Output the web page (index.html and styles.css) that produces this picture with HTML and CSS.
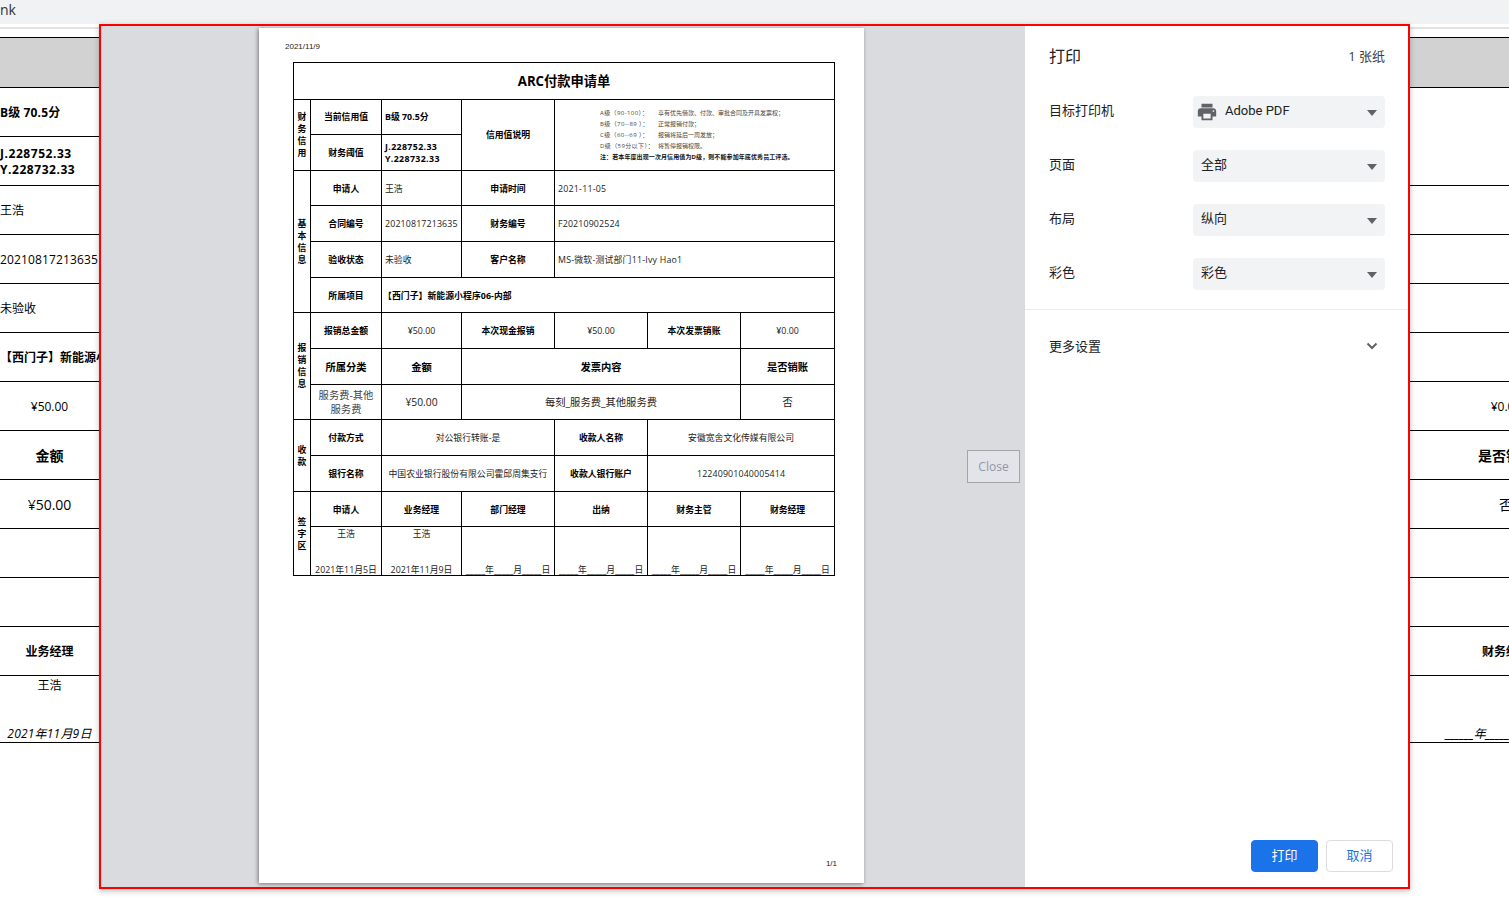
FILE: index.html
```html
<!DOCTYPE html>
<html lang="zh-CN">
<head>
<meta charset="utf-8">
<title>ARC付款申请单</title>
<link rel="stylesheet" href="styles.css">
</head>
<body>
<div class="topbar">nk</div>
<div class="rule"></div>
<div class="bg">
  <div class="bg-row head"><div class="bg-cell"></div><div class="bg-cell bg-right"></div></div>
  <div class="bg-row strong"><div class="bg-cell tl num">B级 70.5分</div><div class="bg-cell bg-right noline"></div></div>
  <div class="bg-row strong"><div class="bg-cell tl wide">J.228752.33<br>Y.228732.33</div><div class="bg-cell bg-right"></div></div>
  <div class="bg-row"><div class="bg-cell tl">王浩</div><div class="bg-cell bg-right"></div></div>
  <div class="bg-row"><div class="bg-cell tl num">20210817213635</div><div class="bg-cell bg-right"></div></div>
  <div class="bg-row"><div class="bg-cell tl">未验收</div><div class="bg-cell bg-right"></div></div>
  <div class="bg-row strong"><div class="bg-cell tl">【西门子】新能源小程序06-内部</div><div class="bg-cell bg-right"></div></div>
  <div class="bg-row"><div class="bg-cell">¥50.00</div><div class="bg-cell bg-right">¥0.00</div></div>
  <div class="bg-row strong large"><div class="bg-cell">金额</div><div class="bg-cell bg-right">是否销账</div></div>
  <div class="bg-row large"><div class="bg-cell">¥50.00</div><div class="bg-cell bg-right">否</div></div>
  <div class="bg-row"><div class="bg-cell"></div><div class="bg-cell bg-right"></div></div>
  <div class="bg-row"><div class="bg-cell"></div><div class="bg-cell bg-right"></div></div>
  <div class="bg-row strong"><div class="bg-cell">业务经理</div><div class="bg-cell bg-right">财务经理</div></div>
  <div class="bg-row last">
    <div class="bg-cell sign"><span>王浩</span><em>2021年11月9日</em></div>
    <div class="bg-cell bg-right sign"><span></span><em>______年______月______日</em></div>
  </div>
</div>

<div class="dialog">
  <div class="preview">
    <div class="paper">
      <div class="print-date">2021/11/9</div>
      <table class="form">
        <colgroup>
          <col class="c-v"><col class="c-1"><col class="c-2"><col class="c-3"><col class="c-3"><col class="c-3"><col class="c-4">
        </colgroup>
        <tr class="r37"><th colspan="7" class="title">ARC付款申请单</th></tr>
        <tr class="r35a">
          <th rowspan="2" class="vert">财务信用</th>
          <th>当前信用值</th>
          <th class="l">B级 70.5分</th>
          <th rowspan="2">信用值说明</th>
          <td rowspan="2" colspan="3" class="legend">
            <div><span class="grade">A级（90-100）：</span>享有优先借款、付款、审批合同及开具发票权；</div>
            <div><span class="grade">B级（70--89 ）：</span>正常报销付款；</div>
            <div><span class="grade">C级（60--69 ）：</span>报销将延后一周发放；</div>
            <div><span class="grade">D级（59分以下）：</span>将暂停报销权限。</div>
            <div class="note">注：若本年度出现一次月信用值为D级，则不能参加年底优秀员工评选。</div>
          </td>
        </tr>
        <tr class="r36">
          <th>财务阈值</th>
          <th class="l wide">J.228752.33<br>Y.228732.33</th>
        </tr>
        <tr class="r35">
          <th rowspan="4" class="vert">基本信息</th>
          <th>申请人</th>
          <td class="l">王浩</td>
          <th>申请时间</th>
          <td colspan="3" class="l lat">2021-11-05</td>
        </tr>
        <tr class="r36">
          <th>合同编号</th>
          <td class="l num">20210817213635</td>
          <th>财务编号</th>
          <td colspan="3" class="l num">F20210902524</td>
        </tr>
        <tr class="r36">
          <th>验收状态</th>
          <td class="l">未验收</td>
          <th>客户名称</th>
          <td colspan="3" class="l lat">MS-微软-测试部门11-Ivy Hao1</td>
        </tr>
        <tr class="r35">
          <th>所属项目</th>
          <th colspan="5" class="l bracket">【西门子】新能源小程序06-内部</th>
        </tr>
        <tr class="r36">
          <th rowspan="3" class="vert">报销信息</th>
          <th>报销总金额</th>
          <td>¥50.00</td>
          <th>本次现金报销</th>
          <td>¥50.00</td>
          <th>本次发票销账</th>
          <td>¥0.00</td>
        </tr>
        <tr class="r36 big">
          <th>所属分类</th>
          <th>金额</th>
          <th colspan="3">发票内容</th>
          <th>是否销账</th>
        </tr>
        <tr class="r35a big">
          <td class="tight">服务费-其他服务费</td>
          <td>¥50.00</td>
          <td colspan="3">每刻_服务费_其他服务费</td>
          <td>否</td>
        </tr>
        <tr class="r36">
          <th rowspan="2" class="vert">收款</th>
          <th>付款方式</th>
          <td colspan="2">对公银行转账-是</td>
          <th>收款人名称</th>
          <td colspan="2">安徽宽舍文化传媒有限公司</td>
        </tr>
        <tr class="r36">
          <th>银行名称</th>
          <td colspan="2">中国农业银行股份有限公司霍邱周集支行</td>
          <th>收款人银行账户</th>
          <td colspan="2" class="num">12240901040005414</td>
        </tr>
        <tr class="r35">
          <th rowspan="2" class="vert">签字区</th>
          <th>申请人</th>
          <th>业务经理</th>
          <th>部门经理</th>
          <th>出纳</th>
          <th>财务主管</th>
          <th>财务经理</th>
        </tr>
        <tr class="r49">
          <td><div class="sig"><span>王浩</span><span>2021年11月5日</span></div></td>
          <td><div class="sig"><span>王浩</span><span>2021年11月9日</span></div></td>
          <td><div class="sig"><span></span><span>_____年_____月_____日</span></div></td>
          <td><div class="sig"><span></span><span>_____年_____月_____日</span></div></td>
          <td><div class="sig"><span></span><span>_____年_____月_____日</span></div></td>
          <td><div class="sig"><span></span><span>_____年_____月_____日</span></div></td>
        </tr>
      </table>
      <div class="page-no">1/1</div>
    </div>
    <button class="close" type="button">Close</button>
  </div>

  <aside class="side">
    <div class="side-head"><h1>打印</h1><span>1 张纸</span></div>
    <div class="settings">
      <div class="setting">
        <label>目标打印机</label>
        <div class="select">
          <svg class="printer" viewBox="0 0 24 24" width="22" height="22"><path d="M19 8H5c-1.66 0-3 1.34-3 3v6h4v4h12v-4h4v-6c0-1.66-1.34-3-3-3zm-3 11H8v-5h8v5zm3-7c-.55 0-1-.45-1-1s.45-1 1-1 1 .45 1 1-.45 1-1 1zm-1-9H6v4h12V3z"/></svg>
          <span class="pdf">Adobe PDF</span>
          <svg class="caret" viewBox="0 0 10 6" width="10" height="6"><path d="M0 0h10L5 6z"/></svg>
        </div>
      </div>
      <div class="setting">
        <label>页面</label>
        <div class="select"><span>全部</span><svg class="caret" viewBox="0 0 10 6" width="10" height="6"><path d="M0 0h10L5 6z"/></svg></div>
      </div>
      <div class="setting">
        <label>布局</label>
        <div class="select"><span>纵向</span><svg class="caret" viewBox="0 0 10 6" width="10" height="6"><path d="M0 0h10L5 6z"/></svg></div>
      </div>
      <div class="setting">
        <label>彩色</label>
        <div class="select"><span>彩色</span><svg class="caret" viewBox="0 0 10 6" width="10" height="6"><path d="M0 0h10L5 6z"/></svg></div>
      </div>
    </div>
    <div class="more">
      <span>更多设置</span>
      <svg viewBox="0 0 12 8" width="12" height="8"><path d="M1.5 1.5 6 6l4.500-4.500"/></svg>
    </div>
    <div class="actions">
      <button class="btn primary" type="button">打印</button>
      <button class="btn" type="button">取消</button>
    </div>
  </aside>
</div>
</body>
</html>
```

FILE: styles.css
```css
* { box-sizing: border-box; }
html, body { margin: 0; height: 913px; overflow: hidden; background: #fff; }
body {
  position: relative;
  font-family: "Open Sans", "Noto Sans CJK SC", sans-serif;
  color: #000;
}

/* page behind the dialog */
.topbar {
  height: 24px;
  background: #f1f2f4;
  font-size: 14px;
  line-height: 20px;
  color: #333;
}
.rule { height: 5px; border-bottom: 2px solid #e4e4e4; }
.bg {
  margin-top: 8px;
  width: 1602px;
  font-size: 12px;
  line-height: 16px;
}
.bg-row { display: flex; justify-content: space-between; }
.bg-cell {
  width: 99px;
  height: 49px;
  flex: none;
  display: flex;
  align-items: center;
  justify-content: center;
  text-align: center;
  white-space: nowrap;
  padding-top: 2px;
  border-bottom: 1px solid #000;
}
.bg-right { width: 192px; }
.tl { justify-content: flex-start; text-align: left; }
.num { letter-spacing: .14px; }
.wide { letter-spacing: .35px; }
.bg .wide { letter-spacing: .55px; }
.lat { letter-spacing: .22px; }
.noline { border-bottom-color: transparent; }
.head .bg-cell { height: 51px; background: #d2d2d2; border-top: 1px solid #000; }
.strong { font-weight: 700; }
.large { font-size: 14px; }
.last .bg-cell { height: 67px; }
.sign { flex-direction: column; justify-content: space-between; padding: 2px 0 0; }
.sign em { font-style: italic; letter-spacing: .2px; }
.bg-right.sign em { letter-spacing: 0; }

/* dialog */
.dialog {
  position: absolute;
  left: 99px;
  top: 24px;
  width: 1311px;
  height: 865px;
  display: flex;
  border: 2px solid #f00;
  background: #fff;
  box-shadow: 0 2px 6px rgba(0, 0, 0, .25);
}
.preview {
  position: relative;
  width: 924px;
  flex: none;
  background: #dadbdf;
  padding: 2px 0 0 158px;
}
.paper {
  width: 605px;
  height: 855px;
  background: #fff;
  box-shadow: -1px 1px 4px rgba(0, 0, 0, .45);
  display: flex;
  flex-direction: column;
  padding: 14px 27px 14px 34px;
}
.print-date {
  margin-left: -8px;
  height: 20px;
  font: 8px/10px "Liberation Sans", Arial, sans-serif;
  color: #222;
}
.page-no {
  margin-top: auto;
  text-align: right;
  font: 8px/10px "Liberation Sans", Arial, sans-serif;
  color: #222;
}

/* form table */
.form {
  table-layout: fixed;
  border-collapse: collapse;
  width: 541px;
  font-size: 8.83px;
  line-height: 12px;
  color: #222;
}
.c-v { width: 17px; }
.c-1 { width: 71px; }
.c-2 { width: 80px; }
.c-3 { width: 93px; }
.c-4 { width: 94px; }
.form th, .form td {
  border: 1px solid #000;
  padding: 0;
  text-align: center;
  vertical-align: middle;
}
.form th { font-weight: 700; color: #000; }
.form .l { text-align: left; padding-left: 3px; }
.form .bracket { padding-left: 1px; letter-spacing: .06px; }
.form .title { font-size: 13.25px; line-height: 20px; }
.r35 { height: 35px; }
.r35a { height: 35px; }
.r36 { height: 36px; }
.r37 { height: 37px; }
.r49 { height: 49px; }
.form .r35 th, .form .r35 td { padding-top: 1px; }
.form .vert, .form .r35 .vert { padding: 0 3px; line-height: 12px; word-break: break-all; }
.big th, .big td { font-size: 10.3px; line-height: 14px; }
.big .tight { padding: 0 3px; color: #444; }
.form .legend {
  text-align: left;
  padding: 0 0 0 45px;
  font-size: 6px;
  line-height: 11px;
  color: #444;
}
.grade { display: inline-block; width: 58px; letter-spacing: .4px; }
.note { font-weight: 700; color: #111; letter-spacing: .1px; }
.sig {
  height: 48px;
  padding-top: 2px;
  line-height: 10px;
  display: flex;
  flex-direction: column;
  justify-content: space-between;
  white-space: nowrap;
}

.close {
  position: absolute;
  left: 866px;
  top: 424px;
  width: 53px;
  height: 33px;
  padding: 0;
  border: 1px solid #a3a5a8;
  background: #e3e4ea;
  color: #8d99a6;
  font: 12px/16px "Open Sans", sans-serif;
}

/* side panel */
.side {
  flex: 1;
  display: flex;
  flex-direction: column;
  color: #3c4043;
  font-size: 13px;
}
.side-head {
  height: 60px;
  padding: 0 23px 2px 24px;
  display: flex;
  align-items: center;
  justify-content: space-between;
}
.side-head h1 { margin: 0; font-size: 16px; font-weight: 400; color: #202124; }
.settings {
  padding: 10px 23px 19px 24px;
  display: flex;
  flex-direction: column;
  gap: 22px;
  border-bottom: 1px solid #e8eaed;
}
.setting { display: flex; align-items: center; height: 32px; }
.setting label { width: 144px; flex: none; color: #202124; padding-bottom: 6px; }
.select {
  flex: 1;
  height: 32px;
  padding: 0 8px;
  background: #f1f3f4;
  border-radius: 4px;
  display: flex;
  align-items: center;
  color: #202124;
}
.select span { padding-bottom: 6px; }
.select .pdf { font-family: Roboto, sans-serif; padding-bottom: 4px; }
.printer { fill: #5f6368; margin-left: -5px; margin-right: 7px; }
.caret { margin-left: auto; margin-top: 1px; fill: #5f6368; }
.more {
  height: 74px;
  padding: 0 30px 0 24px;
  display: flex;
  align-items: center;
  justify-content: space-between;
  color: #202124;
}
.more span { padding-bottom: 4px; }
.more svg { fill: none; stroke: #5f6368; stroke-width: 2; margin-top: -2px; }
.actions {
  margin-top: auto;
  padding: 0 15px 15px 0;
  display: flex;
  justify-content: flex-end;
  gap: 8px;
}
.btn {
  width: 67px;
  height: 32px;
  padding: 0 0 2px;
  border: 1px solid #dadce0;
  border-radius: 4px;
  background: #fff;
  color: #1a73e8;
  font: 13px/20px "Noto Sans CJK SC", sans-serif;
}
.primary { background: #1a73e8; border-color: #1a73e8; color: #fff; }
```
